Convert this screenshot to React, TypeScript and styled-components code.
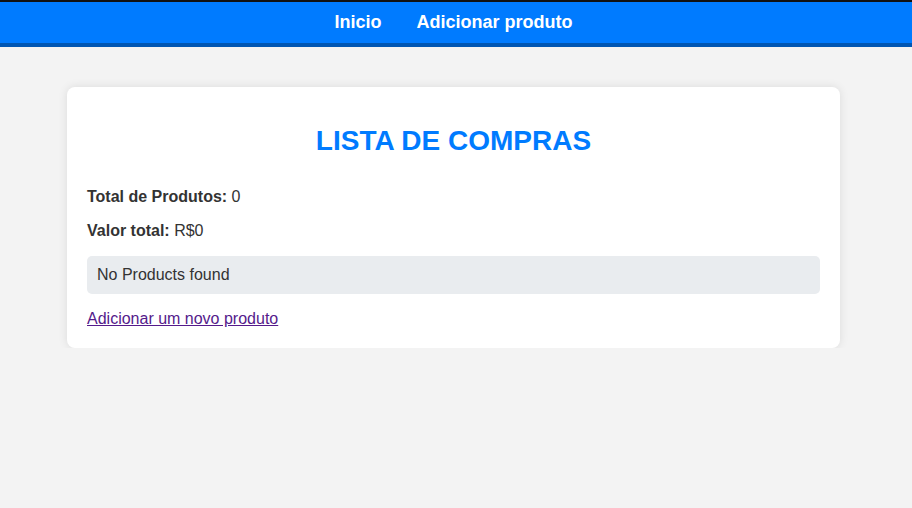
import React from "react";
import styled, { createGlobalStyle } from "styled-components";

const GlobalStyle = createGlobalStyle`
  html, body {
    margin: 0;
    padding: 0;
    background: #f3f3f3;
    font-family: "Liberation Sans", Arial, sans-serif;
    color: #333;
  }
`;

const Header = styled.header`
  background: #007bff;
  border-top: 2px solid #111;
  border-bottom: 4px solid #0056b3;
`;

const Nav = styled.nav`
  display: flex;
  justify-content: center;
  gap: 35px;
  padding: 10px 5px 10px 0;
`;

const NavLink = styled.a`
  color: #fff;
  font-weight: bold;
  font-size: 18px;
  line-height: 21px;
  text-decoration: none;
`;

const Card = styled.main`
  box-sizing: border-box;
  width: 773px;
  margin: 40px 0 0 67px;
  padding: 18px 20px 20px;
  background: #fff;
  border-radius: 8px;
  box-shadow: 0 0 10px rgba(0, 0, 0, 0.1);
`;

const Title = styled.h1`
  margin: 20px 0 31px;
  text-align: center;
  color: #007bff;
  font-size: 28px;
  line-height: 32px;
  font-weight: bold;
`;

const Stat = styled.p`
  margin: 0 0 16px;
  font-size: 16px;
  line-height: 18px;
  color: #333;
`;

const Empty = styled.div`
  margin: 0 0 16px;
  padding: 10px;
  background: #e9ecef;
  border-radius: 5px;
  font-size: 16px;
  line-height: 18px;
  color: #333;
`;

const AddLink = styled.a`
  display: inline-block;
  font-size: 16px;
  line-height: 18px;
  color: #551a8b;
  text-decoration: underline;
`;

export default function App() {
  return (
    <>
      <GlobalStyle />
      <Header>
        <Nav>
          <NavLink href="#">Inicio</NavLink>
          <NavLink href="#">Adicionar produto</NavLink>
        </Nav>
      </Header>
      <Card>
        <Title>LISTA DE COMPRAS</Title>
        <Stat>
          <strong>Total de Produtos:</strong> 0
        </Stat>
        <Stat>
          <strong>Valor total:</strong> R$0
        </Stat>
        <Empty>No Products found</Empty>
        <AddLink href="#">Adicionar um novo produto</AddLink>
      </Card>
    </>
  );
}
